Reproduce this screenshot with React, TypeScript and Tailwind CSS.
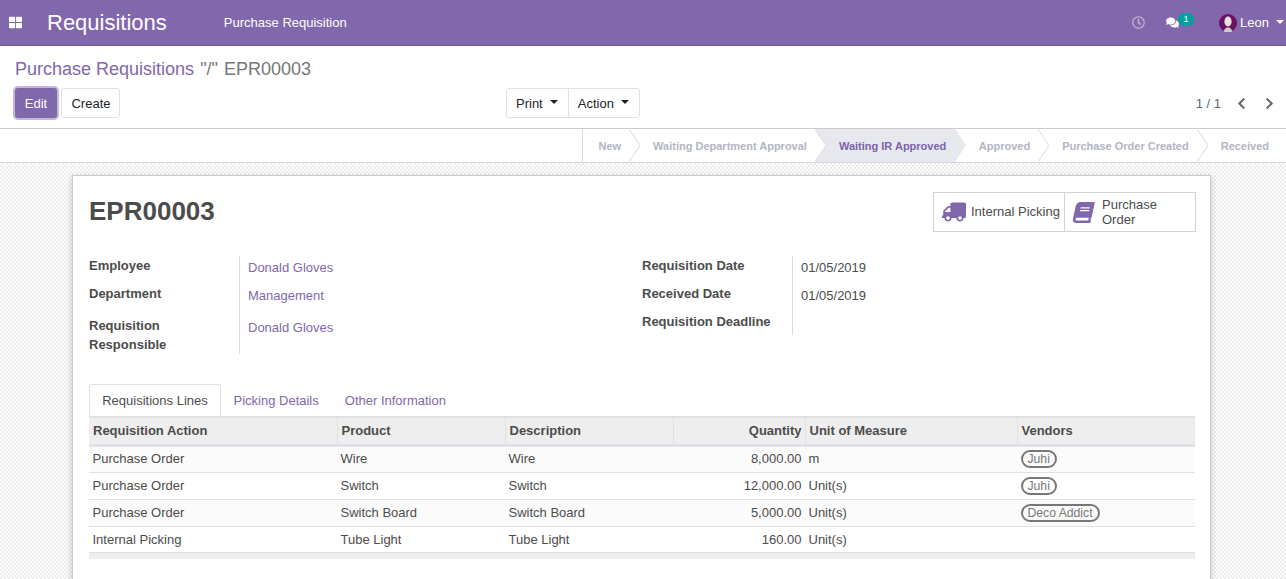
import { FaThLarge, FaRegClock, FaComments, FaTruck, FaBook, FaChevronLeft, FaChevronRight } from "react-icons/fa";

const stages = [
  { label: "New" },
  { label: "Waiting Department Approval" },
  { label: "Waiting IR Approved", active: true },
  { label: "Approved" },
  { label: "Purchase Order Created" },
  { label: "Received" },
];

const lines = [
  { action: "Purchase Order", product: "Wire", description: "Wire", qty: "8,000.00", uom: "m", vendor: "Juhi" },
  { action: "Purchase Order", product: "Switch", description: "Switch", qty: "12,000.00", uom: "Unit(s)", vendor: "Juhi" },
  { action: "Purchase Order", product: "Switch Board", description: "Switch Board", qty: "5,000.00", uom: "Unit(s)", vendor: "Deco Addict" },
  { action: "Internal Picking", product: "Tube Light", description: "Tube Light", qty: "160.00", uom: "Unit(s)", vendor: "" },
];

function Caret() {
  return <span className="inline-block w-0 h-0 border-x-[4px] border-x-transparent border-t-[4px] border-t-current" />;
}

function Avatar() {
  return (
    <svg width="18" height="18" viewBox="0 0 18 18">
      <circle cx="9" cy="9" r="9" fill="#6d0f62" />
      <ellipse cx="9" cy="7.5" rx="3.6" ry="5" fill="#e4e2e2" />
      <path d="M5 18c0-3 1.5-4.5 4-4.5s4 1.5 4 4.5z" fill="#cfcccc" />
    </svg>
  );
}

function Stage({ label, active, first, last }: { label: string; active?: boolean; first?: boolean; last?: boolean }) {
  return (
    <div
      className={`relative h-full flex items-center pt-px text-[11px] font-bold ${first ? "pl-[15px]" : "pl-6"} ${
        active ? "bg-[#e6e8ee] text-[#7c62ad] pr-[8.5px]" : "text-[#b3b5c2] pr-2"
      }`}
    >
      {label}
      {!last && (
        <svg className="absolute -right-[11px] top-0 z-10" width="11" height="33" viewBox="0 0 11 33">
          <path d="M0 0 L11 16.5 L0 33" fill={active ? "#e6e8ee" : "#fff"} stroke={active ? "none" : "#d9d9e2"} />
        </svg>
      )}
    </div>
  );
}

function Field({ label, value, link, className }: { label: string; value?: string; link?: boolean; className?: string }) {
  return (
    <div className={`flex ${className ?? ""}`}>
      <div className="w-[150px] shrink-0 font-bold text-[#4c4c4c] leading-[19px] pr-4">{label}</div>
      <div className={`pl-[9px] pt-[2px] leading-[19px] ${link ? "text-[#8167ab]" : ""}`}>{value}</div>
    </div>
  );
}

export default function App() {
  return (
    <div className="h-[579px] overflow-hidden flex flex-col bg-white text-[13px] text-[#4c4c4c] font-['Liberation_Sans',Arial,sans-serif]">
      <header className="h-[46px] shrink-0 bg-[#8167ab] border-b border-[#6d5a8f] flex items-center text-white">
        <FaThLarge className="ml-[9px] text-[13px]" />
        <span className="ml-[25px] text-[22px] leading-none">Requisitions</span>
        <span className="ml-[57px]">Purchase Requisition</span>
        <FaRegClock className="ml-auto text-[13px] text-white/50" />
        <div className="relative ml-[21px] mr-[40px]">
          <FaComments className="text-[13px]" />
          <span className="absolute -top-[3px] left-[12px] h-[13px] w-[16px] rounded-full bg-[#00a09d] text-[9px] leading-[13px] text-center">1</span>
        </div>
        <Avatar />
        <span className="ml-[3px] mr-[7px]">Leon</span>
        <span className="mr-[2px] -mt-[1px] flex"><Caret /></span>
      </header>

      <div className="h-[83px] shrink-0 border-b border-[#ccc] px-[15px] pt-[12px]">
        <div className="text-[18px] leading-[22px] text-[#777]">
          <span className="text-[#8167ab]">Purchase Requisitions</span> <span className="ml-px">"/"</span> <span className="ml-px">EPR00003</span>
        </div>
        <div className="flex items-center mt-[8px] h-[30px]">
          <button className="h-[30px] w-[42px] pt-px rounded-[3px] bg-[#8167ab] text-white shadow-[0_0_0_2px_#c3b6d8]">Edit</button>
          <button className="ml-1 h-[30px] w-[59px] pt-px pl-px rounded-[3px] border border-[#dee2e6] text-[#212529]">Create</button>
          <div className="ml-[386px] flex h-[30px] rounded-[3px] border border-[#dee2e6] text-[#212529]">
            <button className="pl-[9px] pr-[10px] pt-px flex items-center gap-[7px] border-r border-[#dee2e6]">
              Print <span className="-mt-[4px] flex"><Caret /></span>
            </button>
            <button className="pl-[9px] pr-[10px] pt-px flex items-center gap-[7px]">
              Action <span className="-mt-[4px] flex"><Caret /></span>
            </button>
          </div>
          <div className="ml-auto flex items-center text-[#5a6473]">
            <span className="pt-px">1 / 1</span>
            <FaChevronLeft className="ml-[14px] text-[13px] text-[#666]" />
            <FaChevronRight className="ml-[15px] -mr-[5px] text-[13px] text-[#666]" />
          </div>
        </div>
      </div>

      <div className="h-[34px] shrink-0 border-b border-[#d9d9e2] flex justify-end">
        <div className="flex h-full border-l border-[#d9d9e2] pr-[9px]">
          {stages.map((s, i) => (
            <Stage key={i} label={s.label} active={s.active} first={i === 0} last={i === stages.length - 1} />
          ))}
        </div>
      </div>

      <main className="flex-1 min-h-0 overflow-hidden px-[72px] pt-[12px] pr-[75px] bg-[repeating-conic-gradient(#ececec_0_25%,#ffffff_0_50%)] bg-[length:4px_4px]">
        <div className="bg-white border border-[#c9c9d4] shadow-[0_2px_6px_rgba(0,0,0,0.22)] h-[600px] px-4 pt-4">
          <div className="flex justify-between items-start h-[64px]">
            <h1 className="text-[26px] leading-[38px] font-bold text-[#4c4c4c]">EPR00003</h1>
            <div className="flex h-[40px] w-[263px] border border-[#ced4da] -mr-[2px] text-[#4c4c4c]">
              <div className="w-[131px] flex items-center gap-[5px] pl-[8px] border-r border-[#ced4da]">
                <FaTruck className="text-[24px] text-[#8167ab] -scale-x-100" />
                <span>Internal Picking</span>
              </div>
              <div className="flex items-center gap-[8px] pl-[8px]">
                <FaBook className="text-[21px] text-[#8167ab] -skew-x-12" />
                <span className="leading-[15px]">Purchase<br />Order</span>
              </div>
            </div>
          </div>

          <div className="flex h-[128px]">
            <div className="relative w-[553px]">
              <div className="absolute left-[150px] top-0 h-[98px] border-l border-[#d9d9e2]" />
              <Field label="Employee" value="Donald Gloves" link className="h-[28px]" />
              <Field label="Department" value="Management" link className="h-[32px]" />
              <Field label="Requisition Responsible" value="Donald Gloves" link className="h-[38px]" />
            </div>
            <div className="relative">
              <div className="absolute left-[150px] top-0 h-[79px] border-l border-[#d9d9e2]" />
              <Field label="Requisition Date" value="01/05/2019" className="h-[28px]" />
              <Field label="Received Date" value="01/05/2019" className="h-[28px]" />
              <Field label="Requisition Deadline" className="h-[28px]" />
            </div>
          </div>

          <div className="flex h-[32px] items-start">
            <div className="h-[33px] w-[132px] flex items-center justify-center border border-b-0 border-[#dee2e6] rounded-t-[3px]">Requisitions Lines</div>
            <div className="h-[33px] pl-[12.5px] pr-[13px] flex items-center text-[#8167ab]">Picking Details</div>
            <div className="h-[33px] px-[13px] flex items-center text-[#8167ab]">Other Information</div>
          </div>

          <table className="relative w-[1106px] table-fixed border-collapse">
            <colgroup>
              <col className="w-[248px]" />
              <col className="w-[168px]" />
              <col className="w-[168px]" />
              <col className="w-[132px]" />
              <col className="w-[212px]" />
              <col />
            </colgroup>
            <thead>
              <tr className="h-[28px] bg-[#eeeeee] border-t-[2px] border-b-[3px] border-[#dee2e6] font-bold">
                <th className="text-left pl-[4px] border-r border-[#dee2e6]">Requisition Action</th>
                <th className="text-left pl-[4px] border-r border-[#dee2e6]">Product</th>
                <th className="text-left pl-[4px] border-r border-[#dee2e6]">Description</th>
                <th className="text-right pr-[3px] border-r border-[#dee2e6]">Quantity</th>
                <th className="text-left pl-[4px] border-r border-[#dee2e6]">Unit of Measure</th>
                <th className="text-left pl-[4px]">Vendors</th>
              </tr>
            </thead>
            <tbody>
              {lines.map((l, i) => (
                <tr
                  key={i}
                  className={`border-b border-[#dee2e6] ${i === lines.length - 1 ? "h-[26px] [&>td]:pt-[2px]" : "h-[27px]"} ${
                    i % 2 === 0 ? "bg-[#fbfbfb]" : "bg-white"
                  }`}
                >
                  <td className="pl-[3.5px]">{l.action}</td>
                  <td className="pl-[3.5px]">{l.product}</td>
                  <td className="pl-[3.5px]">{l.description}</td>
                  <td className="pr-[3.5px] text-right">{l.qty}</td>
                  <td className="pl-[3.5px]">{l.uom}</td>
                  <td className="pl-[3.5px]">
                    {l.vendor && (
                      <span className="inline-flex h-[18px] items-center rounded-full border-2 border-[#777] px-[5px] text-[12.2px] text-[#777]">
                        {l.vendor}
                      </span>
                    )}
                  </td>
                </tr>
              ))}
            </tbody>
          </table>
          <div className="h-[6px] w-[1106px] bg-[#eeeeee]" />
        </div>
      </main>
    </div>
  );
}
